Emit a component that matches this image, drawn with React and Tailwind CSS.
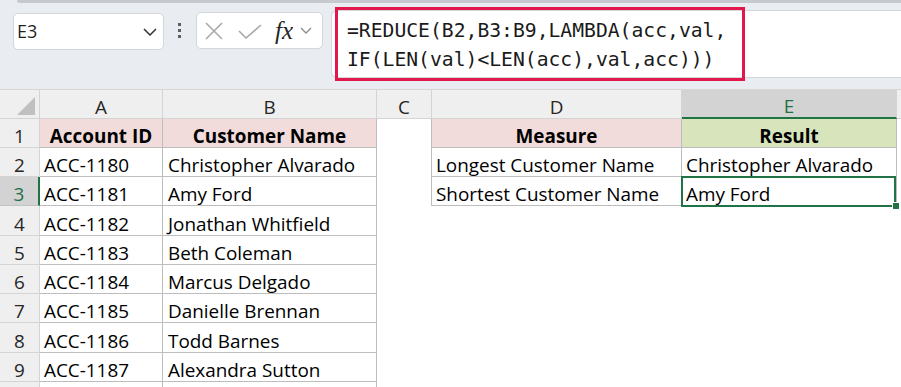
import React from "react";

const people = [
  ["ACC-1180", "Christopher Alvarado"],
  ["ACC-1181", "Amy Ford"],
  ["ACC-1182", "Jonathan Whitfield"],
  ["ACC-1183", "Beth Coleman"],
  ["ACC-1184", "Marcus Delgado"],
  ["ACC-1185", "Danielle Brennan"],
  ["ACC-1186", "Todd Barnes"],
  ["ACC-1187", "Alexandra Sutton"],
];

const summary = [
  ["Longest Customer Name", "Christopher Alvarado"],
  ["Shortest Customer Name", "Amy Ford"],
];

const cols = ["A", "B", "C", "D", "E"];

const FormulaBar = () => {
  return (
    <div className="h-[90px] bg-[#e9edf1] border-b border-[#d6d6d6] flex flex-col">
      <div className="ml-[17px] h-[3px] rounded-bl-[3px] bg-[#c6cacf]" />
      <div className="flex items-start">
        {/* name box */}
        <div className="ml-[13px] mt-[10px] w-[151px] h-[37px] bg-white border border-[#d3d6da] rounded-[5px] flex items-center pl-[3px] pr-[6px]">
          <span className="text-[18px] text-[#1f1f1f] font-['Open_Sans',sans-serif]">E3</span>
          <svg className="ml-auto" width="14" height="8" viewBox="0 0 14 8">
            <path d="M1 1l6 6 6-6" fill="none" stroke="#333" strokeWidth="1.5" />
          </svg>
        </div>

        <div className="ml-[14px] mt-[20px] flex flex-col gap-[3px]">
          <div className="w-[3px] h-[3px] bg-[#5f5f5f]" />
          <div className="w-[3px] h-[3px] bg-[#5f5f5f]" />
          <div className="w-[3px] h-[3px] bg-[#5f5f5f]" />
        </div>

        {/* cancel / enter / fx */}
        <div className="ml-[15px] mt-[9px] w-[127px] h-[37px] bg-white border border-[#d3d6da] rounded-[5px] flex items-center">
          <svg className="ml-[8px]" width="18" height="18" viewBox="0 0 18 18">
            <path d="M1 1l16 16M17 1L1 17" stroke="#a8a8a8" strokeWidth="1.6" />
          </svg>
          <svg className="ml-[15px] mt-[2px]" width="24" height="15" viewBox="0 0 24 15">
            <path d="M1 7l7 7L23 1" fill="none" stroke="#a8a8a8" strokeWidth="1.6" />
          </svg>
          <span className="ml-[13px] text-[25px] leading-none italic text-[#262626] font-['Liberation_Serif',serif]">
            fx
          </span>
          <svg className="ml-[7px]" width="12" height="7" viewBox="0 0 12 7">
            <path d="M1 1l5 5 5-5" fill="none" stroke="#8a8a8a" strokeWidth="1.3" />
          </svg>
        </div>

        {/* formula input */}
        <div className="ml-[8px] mt-[7px] h-[68px] flex-1 bg-white border border-r-0 border-[#d3d6da] rounded-l-[6px]">
          <div className="ml-[3px] mt-[-4px] w-[410px] h-[74px] border-[3px] border-[#e2184c] pl-[9px] pt-[6px]">
            <p className="whitespace-pre text-[19.7px] leading-[29px] text-[#1a1a1a] font-['DejaVu_Sans_Mono',monospace]">
              {"=REDUCE(B2,B3:B9,LAMBDA(acc,val,\nIF(LEN(val)<LEN(acc),val,acc)))"}
            </p>
          </div>
        </div>
      </div>
    </div>
  );
};

const Sheet = () => {
  const line = "border-[#bdbdbd]";
  const rows = [];

  for (let r = 1; r <= 10; r++) {
    const person = people[r - 2];
    const sum = summary[r - 2];
    const selected = r === 3;

    rows.push(
      <div
        key={`h${r}`}
        className={
          selected
            ? "flex items-end justify-center bg-[#d3d3d3] text-[#1e7145] border-b border-[#c4c4c4] border-r-2 border-r-[#217346]"
            : "flex items-end justify-center bg-[#efefef] text-[#262626] border-r border-b border-[#d4d4d4]"
        }
      >
        {r < 10 ? r : ""}
      </div>
    );

    if (r === 1) {
      rows.push(
        <div key="a1" className={`flex items-end justify-center bg-[#f2dcdb] font-bold border-r border-b ${line}`}>
          Account ID
        </div>,
        <div key="b1" className={`flex items-end justify-center bg-[#f2dcdb] font-bold border-r border-b ${line}`}>
          Customer Name
        </div>
      );
    } else if (r === 10) {
      rows.push(
        <div key="a10" className={`border-r ${line}`} />,
        <div key="b10" className={`border-r ${line}`} />
      );
    } else {
      rows.push(
        <div key={`a${r}`} className={`flex items-end pl-[4px] border-r border-b ${line}`}>
          {person[0]}
        </div>,
        <div key={`b${r}`} className={`flex items-end pl-[5px] border-r border-b ${line}`}>
          {person[1]}
        </div>
      );
    }

    rows.push(<div key={`c${r}`} className={r <= 3 ? `border-r ${line}` : ""} />);

    if (r === 1) {
      rows.push(
        <div key="d1" className={`flex items-end justify-center bg-[#f2dcdb] font-bold border-r border-b ${line}`}>
          Measure
        </div>,
        <div key="e1" className={`flex items-end justify-center bg-[#d8e4bc] font-bold border-r border-b ${line}`}>
          Result
        </div>
      );
    } else if (sum) {
      rows.push(
        <div key={`d${r}`} className={`flex items-end pl-[4px] border-r border-b ${line}`}>
          {sum[0]}
        </div>,
        <div key={`e${r}`} className={`relative flex items-end pl-[4px] border-r border-b ${line}`}>
          {sum[1]}
          {selected && (
            <>
              <div className="absolute -left-[1px] -top-[1px] right-0 -bottom-[2px] border-2 border-[#217346]" />
              <div className="absolute -right-[4px] -bottom-[5px] w-[8px] h-[8px] bg-[#217346] border border-white" />
            </>
          )}
        </div>
      );
    } else {
      rows.push(<div key={`d${r}`} />, <div key={`e${r}`} />);
    }

    rows.push(<div key={`f${r}`} />);
  }

  return (
    <div className="grid grid-cols-[40px_123px_214px_55px_250px_215px_4px] grid-rows-[29px_29px_29px_29px_30px_29px_29px_29px_30px_29px_29px] text-[18.9px] leading-[21px] text-black whitespace-nowrap font-['Open_Sans',sans-serif]">
      <div className="relative bg-[#efefef] border-r border-b border-[#d4d4d4]">
        <svg className="absolute left-[17px] top-[7px]" width="18" height="18" viewBox="0 0 18 18">
          <polygon points="18,0 18,18 0,18" fill="#c0c0c0" />
        </svg>
      </div>
      {cols.map((c) => (
        <div
          key={c}
          className={
            c === "E"
              ? "flex items-end justify-center bg-[#d3d3d3] text-[#1e7145] border-r border-[#d4d4d4] border-b-2 border-b-[#217346]"
              : "flex items-end justify-center bg-[#efefef] text-[#262626] border-r border-b border-[#d4d4d4]"
          }
        >
          {c}
        </div>
      ))}
      <div className="bg-[#efefef] border-b border-[#d4d4d4]" />
      {rows}
    </div>
  );
};

export default function App() {
  return (
    <div className="w-[901px] h-[387px] overflow-hidden bg-white">
      <FormulaBar />
      <Sheet />
    </div>
  );
}
